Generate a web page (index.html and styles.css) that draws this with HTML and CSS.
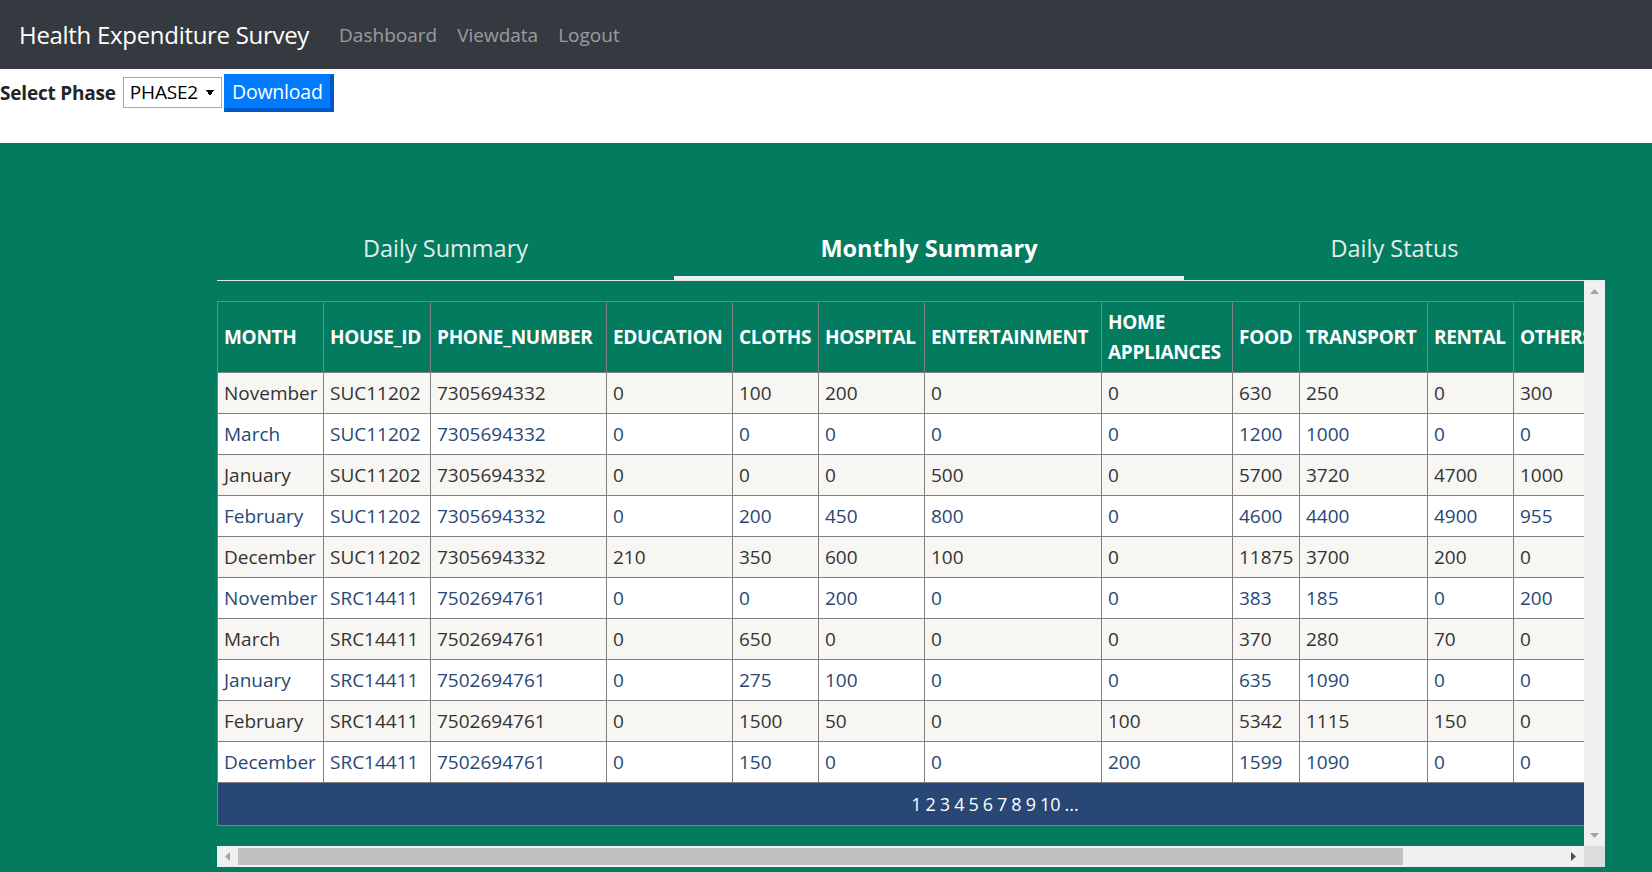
FILE: index.html
```html
<!DOCTYPE html>
<html lang="en">
<head>
<meta charset="utf-8">
<title>Health Expenditure Survey</title>
<link rel="stylesheet" href="styles.css">
</head>
<body>
<nav class="navbar">
  <a class="brand" href="#">Health Expenditure Survey</a>
  <ul class="nav">
    <li><a href="#">Dashboard</a></li>
    <li><a href="#">Viewdata</a></li>
    <li><a href="#">Logout</a></li>
  </ul>
</nav>

<div class="toolbar">
  <label class="phase-label" for="phase">Select Phase</label>
  <select class="phase-select" id="phase"><option>PHASE2</option><option>PHASE1</option></select>
  <button class="btn-download" type="button">Download</button>
</div>

<main class="panel">
  <div class="tabs">
    <div class="tab tab-daily">Daily Summary</div>
    <div class="tab tab-monthly active">Monthly Summary</div>
    <div class="tab tab-status">Daily Status</div>
  </div>
  <div class="grid-frame">
    <div class="grid-viewport">
      <table class="grid">
        <colgroup>
          <col class="c-month"><col class="c-house"><col class="c-phone"><col class="c-edu">
          <col class="c-cloth"><col class="c-hosp"><col class="c-ent"><col class="c-home">
          <col class="c-food"><col class="c-trans"><col class="c-rent"><col class="c-other">
        </colgroup>
        <thead>
          <tr>
            <th>MONTH</th><th>HOUSE_ID</th><th>PHONE_NUMBER</th><th>EDUCATION</th><th>CLOTHS</th><th>HOSPITAL</th><th>ENTERTAINMENT</th><th>HOME APPLIANCES</th><th>FOOD</th><th>TRANSPORT</th><th>RENTAL</th><th>OTHERS</th>
          </tr>
        </thead>
        <tbody>
          <tr class="row"><td>November</td><td>SUC11202</td><td>7305694332</td><td>0</td><td>100</td><td>200</td><td>0</td><td>0</td><td>630</td><td>250</td><td>0</td><td>300</td></tr>
          <tr class="alt"><td>March</td><td>SUC11202</td><td>7305694332</td><td>0</td><td>0</td><td>0</td><td>0</td><td>0</td><td>1200</td><td>1000</td><td>0</td><td>0</td></tr>
          <tr class="row"><td>January</td><td>SUC11202</td><td>7305694332</td><td>0</td><td>0</td><td>0</td><td>500</td><td>0</td><td>5700</td><td>3720</td><td>4700</td><td>1000</td></tr>
          <tr class="alt"><td>February</td><td>SUC11202</td><td>7305694332</td><td>0</td><td>200</td><td>450</td><td>800</td><td>0</td><td>4600</td><td>4400</td><td>4900</td><td>955</td></tr>
          <tr class="row"><td>December</td><td>SUC11202</td><td>7305694332</td><td>210</td><td>350</td><td>600</td><td>100</td><td>0</td><td>11875</td><td>3700</td><td>200</td><td>0</td></tr>
          <tr class="alt"><td>November</td><td>SRC14411</td><td>7502694761</td><td>0</td><td>0</td><td>200</td><td>0</td><td>0</td><td>383</td><td>185</td><td>0</td><td>200</td></tr>
          <tr class="row"><td>March</td><td>SRC14411</td><td>7502694761</td><td>0</td><td>650</td><td>0</td><td>0</td><td>0</td><td>370</td><td>280</td><td>70</td><td>0</td></tr>
          <tr class="alt"><td>January</td><td>SRC14411</td><td>7502694761</td><td>0</td><td>275</td><td>100</td><td>0</td><td>0</td><td>635</td><td>1090</td><td>0</td><td>0</td></tr>
          <tr class="row"><td>February</td><td>SRC14411</td><td>7502694761</td><td>0</td><td>1500</td><td>50</td><td>0</td><td>100</td><td>5342</td><td>1115</td><td>150</td><td>0</td></tr>
          <tr class="alt"><td>December</td><td>SRC14411</td><td>7502694761</td><td>0</td><td>150</td><td>0</td><td>0</td><td>200</td><td>1599</td><td>1090</td><td>0</td><td>0</td></tr>
        </tbody>
        <tfoot>
          <tr class="pager">
            <td colspan="12">
              <span class="pages"><span>1</span><a href="#">2</a><a href="#">3</a><a href="#">4</a><a href="#">5</a><a href="#">6</a><a href="#">7</a><a href="#">8</a><a href="#">9</a><a href="#">10</a><a href="#">...</a></span>
            </td>
          </tr>
        </tfoot>
      </table>
    </div>
    <div class="vbar">
      <div class="sb-btn"><svg width="9" height="5" viewBox="0 0 9 5"><polygon points="0,5 9,5 4.5,0" fill="#a3a3a3"/></svg></div>
      <div class="sb-fill"></div>
      <div class="sb-btn"><svg width="9" height="5" viewBox="0 0 9 5"><polygon points="0,0 9,0 4.5,5" fill="#a3a3a3"/></svg></div>
    </div>
    <div class="hbar">
      <div class="sb-btn"><svg width="5" height="9" viewBox="0 0 5 9"><polygon points="5,0 5,9 0,4.5" fill="#a3a3a3"/></svg></div>
      <div class="sb-thumb"></div>
      <div class="sb-fill"></div>
      <div class="sb-btn"><svg width="5" height="9" viewBox="0 0 5 9"><polygon points="0,0 0,9 5,4.5" fill="#505050"/></svg></div>
    </div>
    <div class="sb-corner"></div>
  </div>
</main>
</body>
</html>
```

FILE: styles.css
```css
html, body {
  margin: 0;
  padding: 0;
}

body {
  font-family: "Open Sans", "Noto Sans", sans-serif;
  font-size: 20px;
  color: #212529;
  background: #027b5e;
}

a {
  text-decoration: none;
  color: inherit;
}

/* ---------- navbar ---------- */
.navbar {
  height: 69px;
  background: #343a40;
  display: flex;
  align-items: center;
  padding-left: 19px;
  box-sizing: border-box;
}

.brand {
  color: #ffffff;
  font-size: 24px;
  letter-spacing: -0.3px;
  margin-right: 30px;
  line-height: 36px;
}

.nav {
  list-style: none;
  margin: 0;
  padding: 0;
  display: flex;
  gap: 20px;
}

.nav a {
  color: rgba(255, 255, 255, 0.5);
  font-size: 19px;
}

/* ---------- toolbar ---------- */
.toolbar {
  background: #ffffff;
  height: 74px;
  padding-top: 5px;
  box-sizing: border-box;
  display: flex;
  align-items: flex-start;
}

.phase-label {
  font-weight: 700;
  font-size: 19px;
  letter-spacing: -0.2px;
  color: #212529;
  line-height: 38px;
  margin-right: 7px;
}

.phase-select {
  appearance: none;
  -webkit-appearance: none;
  margin: 3px 2px 0 0;
  width: 99px;
  height: 31px;
  border: 1px solid #a9a9a9;
  border-radius: 0;
  background-color: #ffffff;
  background-image:
    linear-gradient(to top right, transparent 50%, #000000 50%),
    linear-gradient(to top left, transparent 50%, #000000 50%);
  background-size: 4px 6px, 4px 6px;
  background-position: 82px 12px, 86px 12px;
  background-repeat: no-repeat;
  font-family: "Open Sans", "Noto Sans", sans-serif;
  font-size: 19px;
  letter-spacing: -0.2px;
  color: #000000;
  padding: 0 0 0 6px;
  line-height: 29px;
}

.btn-download {
  height: 38px;
  width: 110px;
  padding: 0;
  background: #007bff;
  color: #ffffff;
  font-family: "Open Sans", "Noto Sans", sans-serif;
  font-size: 19.5px;
  letter-spacing: -0.2px;
  border-style: solid;
  border-width: 1px 4px 4px 1px;
  border-color: #007bff #0058c4 #0058c4 #007bff;
  line-height: 30px;
}

/* ---------- green panel ---------- */
.panel {
  background: #027b5e;
  padding: 80px 47px 5px 217px;
}

.tabs {
  display: flex;
  border-bottom: 1px solid #e4ece9;
}

.tab {
  height: 57px;
  box-sizing: border-box;
  display: flex;
  align-items: center;
  justify-content: center;
  padding-bottom: 8px;
  font-size: 23.5px;
  color: #e3eeea;
}

.tab-daily { flex: 0 0 457px; }
.tab-monthly { flex: 0 0 510px; }
.tab-status { flex: 1 1 auto; }

.tab.active {
  font-weight: 700;
  color: #ffffff;
  border-bottom: 4px solid #eeeeee;
  padding-bottom: 4px;
}

/* ---------- grid frame with scrollbars ---------- */
.grid-frame {
  display: grid;
  grid-template-columns: 1fr 21px;
  grid-template-rows: 565px 21px;
}

.grid-viewport {
  overflow: hidden;
  min-width: 0;
}

.vbar {
  background: #f0f0f0;
  display: flex;
  flex-direction: column;
}

.hbar {
  background: #f0f0f0;
  display: flex;
}

.sb-btn {
  flex: 0 0 21px;
  height: 21px;
  width: 21px;
  display: flex;
  align-items: center;
  justify-content: center;
}

.sb-fill {
  flex: 1 1 auto;
}

.sb-thumb {
  flex: 0 0 1165px;
  margin: 2px 0;
  background: #c1c1c1;
}

.sb-corner {
  background: #dcdcdc;
}

/* ---------- grid ---------- */
.grid {
  margin: 20px 0 0 0;
  border-collapse: collapse;
  table-layout: fixed;
  width: 1556px;
  font-size: 19px;
  line-height: 30px;
}

.c-month { width: 106px; }
.c-house { width: 107px; }
.c-phone { width: 176px; }
.c-edu { width: 126px; }
.c-cloth { width: 86px; }
.c-hosp { width: 106px; }
.c-ent { width: 177px; }
.c-home { width: 131px; }
.c-food { width: 67px; }
.c-trans { width: 128px; }
.c-rent { width: 86px; }
.c-other { width: auto; }

.grid th,
.grid td {
  border: 1px solid #808080;
  padding: 5px 5px 5px 6px;
  text-align: left;
  vertical-align: middle;
  white-space: nowrap;
}

.grid th {
  background: #027b5e;
  color: #ffffff;
  font-weight: 700;
  white-space: normal;
  letter-spacing: -0.3px;
}

.grid .row td {
  background: #f7f6f3;
  color: #333333;
}

.grid .alt td {
  background: #ffffff;
  color: #284775;
}

.grid .pager td {
  background: #284775;
  color: #ffffff;
  text-align: center;
  padding: 6px 0;
}

.pages {
  display: inline-flex;
  gap: 4px;
  font-size: 18px;
}
```
